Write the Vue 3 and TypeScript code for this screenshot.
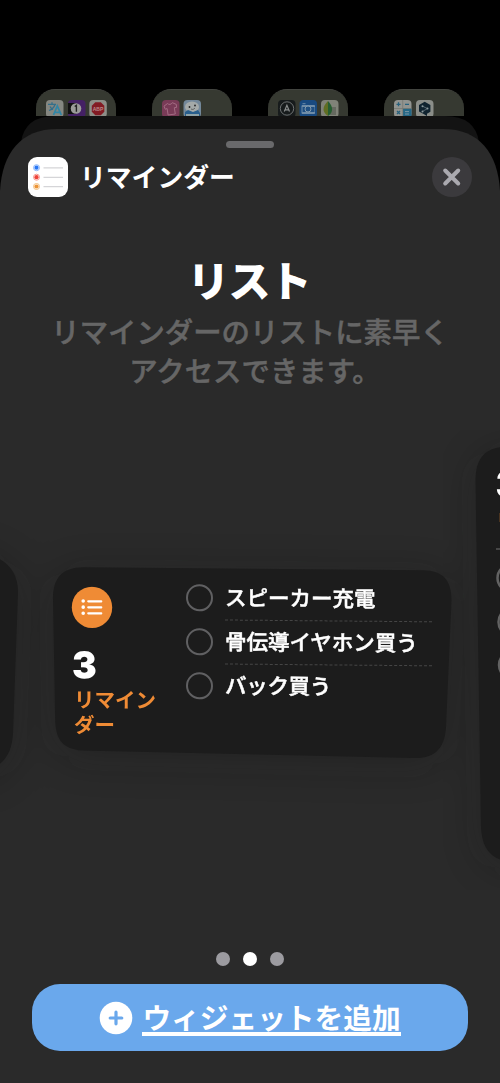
<script setup lang="ts">
interface ReminderItem {
  id: number
  title: string
}

const reminders: ReminderItem[] = [
  { id: 1, title: 'スピーカー充電' },
  { id: 2, title: '骨伝導イヤホン買う' },
  { id: 3, title: 'バック買う' },
]
const pages = [false, true, false]
</script>

<template>
  <main class="screen">
    <div class="home">
      <div class="folder">
        <svg viewBox="0 0 80 60">
          <rect x="10" y="10" width="17.5" height="17.5" rx="4" fill="#858781" />
          <g fill="none" stroke="#326f8b" stroke-width="1.3"><path d="M12 14.3h8M16 12.3v2M19 14.5c-1 3-3 5-6 6M14 16.5c1 2 2 2.500 3 3" /></g>
          <path d="M17.500 25l3.800-9 4 9M19 22.300h5" fill="none" stroke="#3186a6" stroke-width="1.8" />
          <rect x="32" y="10" width="17.5" height="17.5" rx="4" fill="#442064" />
          <path d="M32 13h8v11h-8z" fill="#101010" />
          <circle cx="40" cy="18.5" r="5.3" fill="#9b9b99" />
          <path d="M38.700 16.500l1.700-1.200v6.500" fill="none" stroke="#222" stroke-width="1.4" />
          <rect x="53.3" y="10" width="17.5" height="17.5" rx="4" fill="#8d8e88" />
          <path d="M59.300 12.200h5.500l3.500 3.500v6l-3.500 3.500h-5.500l-3.500-3.500v-6z" fill="#831b24" />
          <text x="62" y="20.700" class="badge-text">ABP</text>
        </svg>
      </div>
      <div class="folder">
        <svg viewBox="0 0 80 60">
          <rect x="10" y="10" width="17.5" height="17.5" rx="4" fill="#793b57" />
          <path d="M15.500 13.500l-3.500 2.700 1.300 3.100 1.800-.8 1 6.500 7.200-1-1-6.300 2.200-.3-.2-3-4-1.700c-1 2-3.600 2.300-4.800.8z" fill="none" stroke="#a36c83" />
          <rect x="31.500" y="10" width="17.5" height="17.5" rx="4" fill="#73889a" />
          <ellipse cx="40" cy="17" rx="7" ry="5.5" fill="#a4aaa9" />
          <path d="M33 22l3-2 5 2 5-2 2 3v3H33z" fill="#285e8c" />
          <circle cx="37.5" cy="17" r=".9" fill="#222" /><circle cx="43" cy="15.5" r=".9" fill="#222" />
          <path d="M39 19c2 1 3 0 4-1" fill="none" stroke="#333" stroke-width=".6" />
          <path d="M34 25h13" stroke="#9aa" stroke-width="1.8" />
        </svg>
      </div>
      <div class="folder">
        <svg viewBox="0 0 80 60">
          <rect x="10" y="10" width="17.5" height="17.5" rx="4" fill="#171b1c" />
          <circle cx="19" cy="18.5" r="6.7" fill="none" stroke="#777b7c" stroke-width=".9" />
          <path d="M16.300 21.500l2.600-6.200 2.600 6.200M17.400 19.800h3" fill="none" stroke="#8a8d8d" stroke-width="1.2" />
          <rect x="31.500" y="10" width="17.5" height="17.5" rx="4" fill="#194a80" />
          <path d="M34 15.500h12.500v8H34zM34.500 13.700h3" fill="#6e8ca8" stroke="#6e8ca8" />
          <path d="M34.500 17h12v5h-12" fill="#205083" /><circle cx="40" cy="19" r="3" fill="#205083" stroke="#839bae" />
          <rect x="53" y="10" width="17.5" height="17.5" rx="4" fill="#808278" />
          <path d="M62 17h6v8h-6z" fill="#65695f" />
          <path d="M60 11c-6 6-6 11 0 15z" fill="#606e23" /><path d="M60 11c5 5 6 11 0 15z" fill="#265e31" />
        </svg>
      </div>
      <div class="folder">
        <svg viewBox="0 0 80 60">
          <rect x="10" y="10" width="17.5" height="17.5" rx="4" fill="#929490" />
          <path d="M19 18.500h8.500v9H19z" fill="#246786" />
          <path d="M18.700 10v17M10 18.500h17.500" stroke="#72756f" stroke-width=".7" />
          <path d="M12.500 14.300h4M14.500 12.300v4M21 14.300h4M13 21l3 3m0-3l-3 3" stroke="#27617d" stroke-width="1.3" />
          <path d="M21 21.600h4M21 24h4" stroke="#7995a4" />
          <rect x="32" y="10" width="17.5" height="17.5" rx="4" fill="#8b8e89" />
          <path d="M40.700 11.800l5.700 3.200v6.700l-3.400 2v2.400l-3.300-2-4.700-2.600v-6.500z" fill="#10232f" />
          <path d="M38.500 16.200l5 2.400-5 2.800" fill="none" stroke="#718087" stroke-width=".7" />
          <circle cx="38.5" cy="16.2" r="1" fill="#8b999d" /><circle cx="43.5" cy="18.6" r="1" fill="#8b999d" /><circle cx="38.5" cy="21.4" r="1" fill="#8b999d" />
        </svg>
      </div>
    </div>
    <svg class="sheet-back" viewBox="0 0 500 967">
      <path d="M21 80V26Q25 0 55 0H445Q475 0 479 26V80z" fill="#131313" />
      <path d="M0 967V75C2 37 21 13 57 13H443C479 13 498 37 500 75V967z" fill="#2a2a2a" />
    </svg>

    <section class="sheet">
      <div class="grabber"></div>
      <header class="header">
        <svg class="app-icon" viewBox="0 0 40 40">
          <rect width="40" height="40" rx="9" fill="#fff" />
          <g fill="none" stroke-width="1">
            <circle cx="8.5" cy="10.7" r="3" stroke="#8bb6fa" />
            <circle cx="8.5" cy="20.2" r="3" stroke="#f79a91" />
            <circle cx="8.5" cy="29.5" r="3" stroke="#f3bf80" />
          </g>
          <circle cx="8.5" cy="10.7" r="2.1" fill="#2877f5" />
          <circle cx="8.5" cy="20.2" r="2.1" fill="#ee4238" />
          <circle cx="8.5" cy="29.5" r="2.1" fill="#ec9436" />
          <path d="M15.500 10.800H35M15.500 20.300H35M15.500 29.600H35" stroke="#d5d5d8" stroke-width="1.2" />
        </svg>
        <h1>リマインダー</h1>
        <button class="close" aria-label="閉じる">
          <svg viewBox="0 0 40 40"><path d="M13.200 13.500L26.200 26.500M26.200 13.500L13.200 26.500" /></svg>
        </button>
      </header>

      <div class="intro">
        <h2>リスト</h2>
        <p>リマインダーのリストに素早く<br />アクセスできます<span class="stop">。</span></p>
      </div>

      <div class="carousel">
        <svg class="cards" viewBox="0 430 500 460">
          <defs>
            <filter id="shade" x="-50%" y="-50%" width="200%" height="200%"><feGaussianBlur stdDeviation="20" /></filter>
            <path id="previous-card" d="M-40 548C-10 552 18 560 18 592L13 733C12 754 3 769-22 772H-60V548z" />
            <path id="current-card" d="M84 567.300L423 570.200C443 570.700 451.500 580 451.500 600L446 727C445 748 435 759 413 758L82 750.500C63 749 56 740 55.200 721L53 599C53 579 61 567.300 84 567.300z" />
            <path id="next-card" d="M540 447H506C486 447 475.500 458 475.500 480L481 827C482 849 491 861 514 862H540z" />
          </defs>
          <g fill="#151716" opacity=".3">
            <use href="#previous-card" y="6" filter="url(#shade)" />
            <use href="#current-card" y="6" filter="url(#shade)" />
            <use href="#next-card" y="6" filter="url(#shade)" />
          </g>
          <g fill="#1c1c1c"><use href="#previous-card" /><use href="#current-card" /><use href="#next-card" /></g>
          <text x="495.500" y="498" class="next-count">3</text>
          <path d="M496 549h4" stroke="#555" stroke-width="1.5" />
          <path d="M499.500 513v9" stroke="#49331f" />
          <g fill="none" stroke="#626262" stroke-width="2.5">
            <ellipse cx="509" cy="578" rx="11.5" ry="12.5" /><ellipse cx="509.500" cy="622" rx="11" ry="12.5" /><ellipse cx="510" cy="665" rx="11" ry="12.5" />
          </g>
        </svg>

        <article class="widget">
          <div class="summary">
            <svg class="list-icon" viewBox="0 0 42 42">
              <ellipse cx="21" cy="21" rx="20.2" ry="20.7" fill="#ef8b35" />
              <g fill="#fff"><circle cx="12.2" cy="14.8" r="1.8" /><circle cx="12.2" cy="20.9" r="1.8" /><circle cx="12.2" cy="27" r="1.8" /></g>
              <path d="M17.300 15H30.200M17.300 21H30.200M17.300 27H30.200" stroke="#fff" stroke-width="2.3" stroke-linecap="round" />
            </svg>
            <strong>{{ reminders.length }}</strong>
            <span class="list-name">リマイン<br />ダー</span>
          </div>
          <ul>
            <li v-for="item in reminders" :key="item.id">
              <i></i><span>{{ item.title }}</span>
            </li>
          </ul>
        </article>
      </div>

      <nav class="dots"><i v-for="(active, index) in pages" :key="index" :class="{ active }"></i></nav>
      <button class="add">
        <svg viewBox="0 0 34 34"><circle cx="17" cy="17" r="16.3" fill="#fff" /><path d="M11.200 17H22.800M17 11.200V22.800" stroke="#6aa8ec" stroke-width="3.2" stroke-linecap="round" /></svg>
        <span>ウィジェットを追加</span>
      </button>
    </section>
  </main>
</template>

<style>
body { margin: 0; background: #000; }
</style>

<style scoped>
* { box-sizing: border-box; }
.screen { position: relative; width: 500px; height: 1083px; overflow: hidden; background: #000; font-family: "Noto Sans CJK JP", sans-serif; color: #fff; }
.home { display: flex; justify-content: space-between; height: 116px; padding: 89px 36px 0; overflow: hidden; }
.folder { width: 80px; height: 80px; flex: none; border-radius: 19px; background: #363931; border-top: 1px solid #42443f; }
.folder svg { display: block; width: 80px; height: 60px; }
.badge-text { font: bold 5px "Liberation Sans", sans-serif; fill: #ba8989; text-anchor: middle; }
.sheet-back { position: absolute; top: 116px; left: 0; width: 500px; height: 967px; }
.sheet { position: relative; height: 967px; padding-top: 25px; display: flex; flex-direction: column; }
.grabber { width: 48px; height: 7px; border-radius: 4px; background: #69696b; margin: 0 auto; flex: none; }
.header { display: flex; align-items: center; height: 40px; margin: 9px 28px 0; flex: none; }
.app-icon { width: 40px; height: 40px; }
h1 { margin: -2px 0 0 12px; font-size: 25.8px; line-height: 40px; font-weight: 700; }
.close { width: 40px; height: 40px; border: 0; padding: 0; margin-left: auto; border-radius: 50%; background: #3b3a3d; }
.close svg { display: block; width: 40px; height: 40px; fill: none; stroke: #aaa9af; stroke-width: 4; stroke-linecap: round; }
.intro { text-align: center; height: 233px; padding-top: 52px; flex: none; }
h2 { margin: 0; font-size: 42px; line-height: 60px; font-weight: 900; letter-spacing: -1px; padding-right: 2px; }
p { margin: 3px 0 0; color: #666; font-size: 28.4px; line-height: 38.5px; font-weight: 500; white-space: nowrap; -webkit-text-stroke: .5px #666; }
.stop { margin-right: -10px; }
.carousel { position: relative; height: 460px; flex: none; }
.cards { display: block; width: 500px; height: 460px; }
.next-count { font: 900 38px Inter, sans-serif; fill: #fff; }
.widget { position: absolute; top: 137px; left: 53px; width: 398px; height: 190px; padding: 19px 19px 0; display: grid; grid-template-columns: 114px 1fr; transform: skewY(.5deg); transform-origin: 0 0; }
.summary { display: flex; flex-direction: column; align-items: flex-start; }
.list-icon { width: 42px; height: 42px; margin-left: -1px; }
strong { font: 900 37px/40px Inter, sans-serif; margin: 17px 0 0; }
.list-name { margin: 1px 0 0 2px; color: #ef8b35; font-size: 20.5px; line-height: 25px; font-weight: 700; white-space: nowrap; }
ul { margin: -12px 0 0; padding: 0; list-style: none; }
li { display: flex; align-items: center; height: 44px; white-space: nowrap; font-size: 21.5px; font-weight: 500; }
li i { width: 27px; height: 27px; border: 2.5px solid #606062; border-radius: 50%; margin-right: 12px; flex: none; }
li span { flex: 1; height: 46px; line-height: 43px; -webkit-text-stroke: .5px #fff; }
li:not(:last-child) span { border-bottom: 1px dashed #454545; }
li:last-child span { letter-spacing: -.3px; }
.dots { display: flex; justify-content: center; gap: 13px; height: 14px; margin-top: 62px; flex: none; }
.dots i { width: 14px; height: 14px; border-radius: 50%; background: #9c9ba0; }
.dots i.active { background: #fff; }
.add { display: flex; align-items: center; justify-content: center; gap: 9px; width: 436px; height: 67px; margin: 18px auto 0; padding: 0; border: 0; border-radius: 28px; background: #6aa8ec; color: #fff; font: 700 28.7px/40px "Noto Sans CJK JP", sans-serif; flex: none; }
.add svg { width: 34px; height: 34px; }
.add span { border-bottom: 4px solid #fff; height: 37px; line-height: 36px; }
</style>
